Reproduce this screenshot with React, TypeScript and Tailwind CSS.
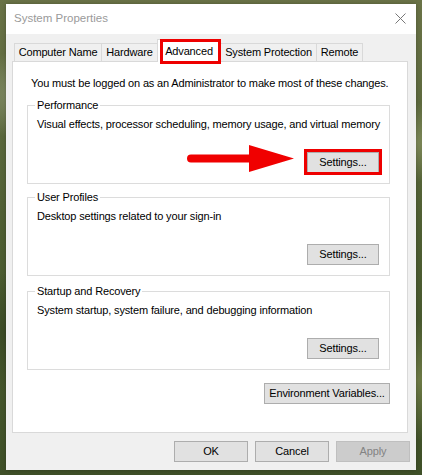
import React from "react";

const font = { fontFamily: '"Liberation Sans", Arial, sans-serif' };

function Btn({ label, w, disabled }: { label: string; w: string; disabled?: boolean }) {
  return (
    <div
      className={
        "h-[21px] flex items-center justify-center border whitespace-nowrap " +
        w +
        (disabled
          ? " bg-[#cccccc] border-[#bfbfbf] text-[#838383]"
          : " bg-[#e1e1e1] border-[#adadad] text-black")
      }
    >
      {label}
    </div>
  );
}

function Group({
  title,
  desc,
  children,
}: {
  title: string;
  desc: string;
  children?: React.ReactNode;
}) {
  return (
    <div className="relative w-[363px] h-[79px] border border-[#dcdcdc] flex flex-col pt-[11px] pl-[9px] pr-[10px]">
      <div className="absolute -top-[9px] left-[7px] bg-white px-[2px] leading-[16px] whitespace-nowrap">{title}</div>
      <div className="leading-[15px] whitespace-nowrap">{desc}</div>
      {children}
    </div>
  );
}

const tabs = [
  { name: "Computer Name", w: "w-[88px]" },
  { name: "Hardware", w: "w-[57px]" },
  { name: "Advanced", w: "w-[64px]", active: true },
  { name: "System Protection", w: "w-[97px]" },
  { name: "Remote", w: "w-[47px]" },
];

export default function App() {
  return (
    <div
      className="w-[422px] h-[475px] overflow-hidden pt-[4px] pl-[6px] bg-[#55653a] text-[11px] tracking-[-0.15px]"
      style={{
        ...font,
        backgroundImage:
          "radial-gradient(circle at 5% 20%, #8a9470 0, transparent 45px), radial-gradient(circle at 98% 30%, #7f8a5a 0, transparent 40px), radial-gradient(circle at 2% 70%, #3b4a25 0, transparent 60px), radial-gradient(circle at 99% 80%, #6d7a45 0, transparent 60px), linear-gradient(180deg, #6a7347 0%, #4e5e32 50%, #3f5028 100%)",
      }}
    >
      <div className="w-[410px] h-[466px] bg-[#f0f0f0] flex flex-col shadow-[0_0_4px_rgba(0,0,0,0.25)]">
        {/* title bar */}
        <div className="h-[30px] bg-white flex items-center justify-between pl-[8px] pr-[10px]">
          <span className="text-[11.5px] text-[#9a9a9a] tracking-normal">System Properties</span>
          <svg width="11" height="11" viewBox="0 0 11 11" className="mt-[-1px]">
            <path d="M0.5 0.5 L10.5 10.5 M10.5 0.5 L0.5 10.5" stroke="#777" strokeWidth="1" />
          </svg>
        </div>

        {/* body */}
        <div className="flex-1 flex flex-col pl-[6px] pt-[6px]">
          {/* tab strip */}
          <div className="h-[21px] flex items-end pl-[2px]">
            {tabs.map((t) =>
              t.active ? (
                <div
                  key={t.name}
                  className={"relative z-10 -mb-px h-[23px] bg-white border border-b-0 border-[#d9d9d9] flex items-start justify-center pt-[3px] -ml-px whitespace-nowrap " + t.w}
                >
                  {t.name}
                  <div className="absolute left-[2px] top-[-1px] w-[61px] h-[25px] border-[3px] border-[#ee0000]" />
                </div>
              ) : (
                <div
                  key={t.name}
                  className={"h-[18px] bg-[#f0f0f0] border border-b-0 border-[#d9d9d9] flex items-center justify-center -ml-px first:ml-0 whitespace-nowrap " + t.w}
                >
                  {t.name}
                </div>
              )
            )}
          </div>

          {/* tab panel */}
          <div className="w-[396px] h-[372px] bg-white border border-[#d9d9d9] flex flex-col pt-[14px] text-black">
            <div className="pl-[18px] leading-[15px] whitespace-nowrap">
              You must be logged on as an Administrator to make most of these changes.
            </div>

            <div className="ml-[14px] mt-[14px] flex flex-col">
              <Group title="Performance" desc="Visual effects, processor scheduling, memory usage, and virtual memory">
                <div className="relative mt-[20px] flex justify-end">
                  {/* pointer arrow */}
                  <svg
                    width="108"
                    height="28"
                    viewBox="0 0 108 28"
                    className="absolute left-[150px] top-[-7px]"
                  >
                    <path d="M4 9.5 H62 V0 L107 13.5 L62 27 V17.5 H4 A4 4 0 0 1 4 9.5 Z" fill="#f00000" />
                  </svg>
                  <div className="relative">
                    <Btn label="Settings..." w="w-[72px]" />
                    <div className="absolute -left-[3px] -top-[3px] w-[78px] h-[26px] border-[3px] border-[#ee0000]" />
                  </div>
                </div>
              </Group>

              <div className="mt-[13px]">
                <Group title="User Profiles" desc="Desktop settings related to your sign-in">
                  <div className="mt-[20px] flex justify-end">
                    <Btn label="Settings..." w="w-[72px]" />
                  </div>
                </Group>
              </div>

              <div className="mt-[15px]">
                <Group title="Startup and Recovery" desc="System startup, system failure, and debugging information">
                  <div className="mt-[20px] flex justify-end">
                    <Btn label="Settings..." w="w-[72px]" />
                  </div>
                </Group>
              </div>

              <div className="w-[363px] mt-[13px] flex justify-end">
                <Btn label="Environment Variables..." w="w-[126px]" />
              </div>
            </div>
          </div>

          {/* dialog buttons */}
          <div className="mt-[8px] flex justify-end gap-[7px] pr-[6px]">
            <Btn label="OK" w="w-[74px]" />
            <Btn label="Cancel" w="w-[74px]" />
            <Btn label="Apply" w="w-[74px]" disabled />
          </div>
        </div>
      </div>
    </div>
  );
}
